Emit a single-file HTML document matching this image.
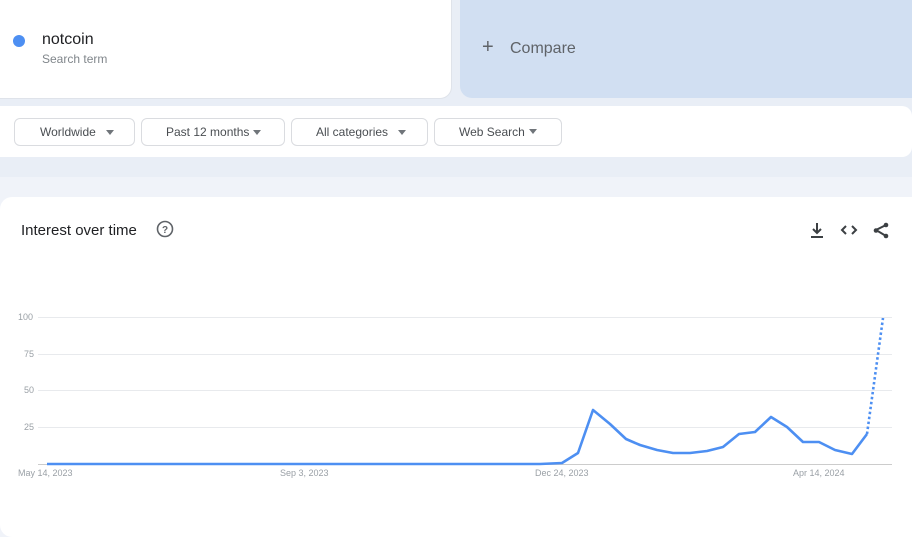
<!DOCTYPE html>
<html><head><meta charset="utf-8"><style>
*{margin:0;padding:0;box-sizing:border-box}
body{width:912px;height:527px;overflow:hidden;background:#f0f3f9;font-family:"Liberation Sans",Arial,sans-serif;position:relative}
.top{position:absolute;left:0;top:0;width:912px;height:177px;background:#e9eef6}
.term{position:absolute;left:-12px;top:-12px;width:464px;height:111px;background:#fff;border-radius:12px;border:1px solid #dfe3ea}
.dot{position:absolute;left:13px;top:35px;width:12px;height:12px;border-radius:50%;background:#4d8ff2}
.name{position:absolute;left:42px;top:31px;font-size:16px;color:#202124}
.sub{position:absolute;left:42px;top:52px;font-size:12px;color:#80868b}
.cmp{position:absolute;left:460px;top:-12px;width:464px;height:110px;background:#d1dff2;border-radius:12px}
.cmp span{position:absolute;top:52px;font-size:16px;color:#5f6368}
.bar{position:absolute;left:-12px;top:106px;width:924px;height:51px;background:#fff;border-radius:10px}
.btn{position:absolute;top:118px;height:28px;border:1px solid #dadce0;border-radius:6px;background:#fff;font-size:12px;color:#4a4e52;line-height:26px}
.btn i{position:absolute;top:11px;width:0;height:0;border-left:4.5px solid transparent;border-right:4.5px solid transparent;border-top:5px solid #70757a}
.card{position:absolute;left:0;top:197px;width:924px;height:340px;background:#fff;border-radius:12px}
.title{position:absolute;left:21px;top:222px;font-size:15px;color:#202124}
.lbl{position:absolute;font-size:9px;color:#9aa0a6}
</style></head><body>
<div class="top"></div>
<div class="term"></div>
<div class="dot"></div>
<div class="name">notcoin</div>
<div class="sub">Search term</div>
<div class="cmp"><span style="left:22px;font-size:20px;top:48px">+</span><span style="left:50px">Compare</span></div>
<div class="bar"></div>
<div class="btn" style="left:14px;width:121px"><span style="position:absolute;left:25px">Worldwide</span><i style="left:91px"></i></div>
<div class="btn" style="left:141px;width:144px"><span style="position:absolute;left:24px">Past 12 months</span><i style="left:111px"></i></div>
<div class="btn" style="left:291px;width:137px"><span style="position:absolute;left:24px">All categories</span><i style="left:106px"></i></div>
<div class="btn" style="left:434px;width:128px"><span style="position:absolute;left:24px">Web Search</span><i style="left:94px;top:10px"></i></div>
<div class="card"></div>
<div class="title">Interest over time</div>
<svg style="position:absolute;left:0;top:0" width="912" height="527">
<circle cx="165" cy="229" r="7.5" fill="none" stroke="#5f6368" stroke-width="1.6"/>
<text x="165" y="233" font-size="10" font-weight="bold" fill="#5f6368" text-anchor="middle" font-family="Liberation Sans">?</text>
<g stroke="#3c4043" stroke-width="2" fill="none">
<path d="M817 223v10M813 229l4 4 4-4M811 237h12"/>
<path d="M846 226l-4 4 4 4M852 226l4 4-4 4"/>
<path d="M886 225l-10 5 10 6"/>
</g>
<circle cx="886" cy="225" r="2.3" fill="#3c4043"/><circle cx="876" cy="230.5" r="2.3" fill="#3c4043"/><circle cx="886" cy="236" r="2.3" fill="#3c4043"/>
<g stroke="#e8eaed" stroke-width="1">
<line x1="38" y1="317.5" x2="892" y2="317.5"/><line x1="38" y1="354.5" x2="892" y2="354.5"/><line x1="38" y1="390.5" x2="892" y2="390.5"/><line x1="38" y1="427.5" x2="892" y2="427.5"/>
</g>
<line x1="38" y1="464.5" x2="892" y2="464.5" stroke="#ccc" stroke-width="1"/>
<polyline fill="none" stroke="#4d8ff2" stroke-width="2.6" stroke-linejoin="round" points="47,464 540,464 562,463 578,453 593,410 610,424 626,439 640,445 657,450 673,453 690,453 707,451 723,447 739,434 755,432 771,417 787,427 803,442 819,442 835,450 852,454 867,434"/>
<line x1="867" y1="434" x2="883" y2="318" stroke="#4d8ff2" stroke-width="2.6" stroke-dasharray="2.5 2.5"/>
</svg>
<div class="lbl" style="left:18px;top:312px">100</div>
<div class="lbl" style="left:24px;top:349px">75</div>
<div class="lbl" style="left:24px;top:385px">50</div>
<div class="lbl" style="left:24px;top:422px">25</div>
<div class="lbl" style="left:18px;top:468px">May 14, 2023</div>
<div class="lbl" style="left:280px;top:468px">Sep 3, 2023</div>
<div class="lbl" style="left:535px;top:468px">Dec 24, 2023</div>
<div class="lbl" style="left:793px;top:468px">Apr 14, 2024</div>
</body></html>
